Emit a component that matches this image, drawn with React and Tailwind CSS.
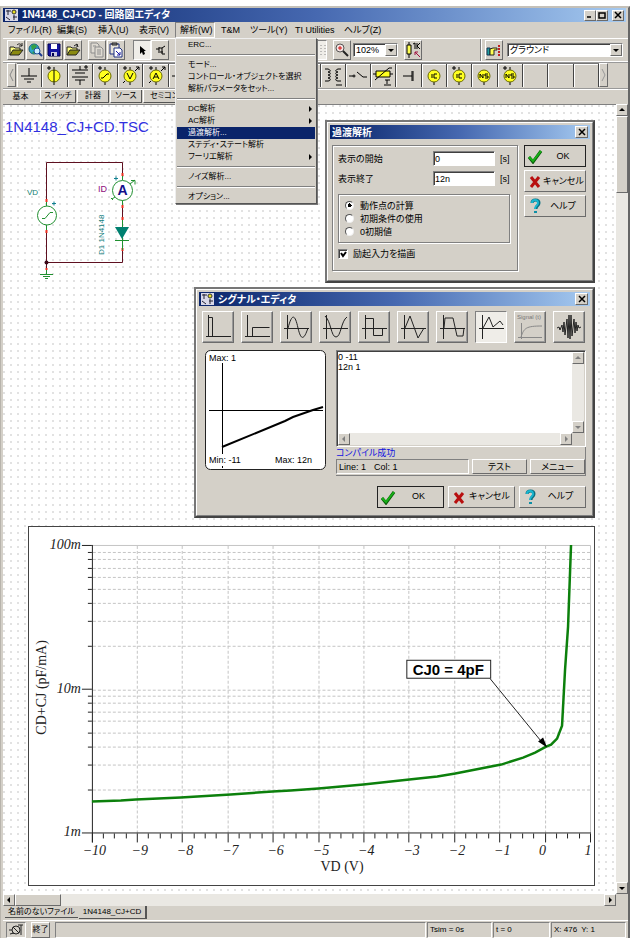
import { useState } from 'react';

const RAISED = 'border border-t-white border-l-white border-r-[#6b6b6b] border-b-[#6b6b6b] bg-[#d4d0c8]';
const SUNKEN = 'border border-t-[#808080] border-l-[#808080] border-r-white border-b-white';

const MENUS = [
  { label: 'ファイル(R)', width: 'w-12' },
  { label: '編集(S)', width: 'w-10' },
  { label: '挿入(U)', width: 'w-10' },
  { label: '表示(V)', width: 'w-10' },
  { label: '解析(W)', width: 'w-10', open: true },
  { label: 'T&M', width: 'w-7' },
  { label: 'ツール(Y)', width: 'w-11' },
  { label: 'TI Utilities', width: 'w-12' },
  { label: 'ヘルプ(Z)', width: 'w-11' },
];

const ANALYSIS_ITEMS = [
  { label: 'ERC...' },
  null,
  { label: 'モード...' },
  { label: 'コントロール・オブジェクトを選択' },
  { label: '解析パラメータをセット...' },
  null,
  { label: 'DC解析', sub: true },
  { label: 'AC解析', sub: true },
  { label: '過渡解析...', active: true },
  { label: 'ステディ・ステート解析' },
  { label: 'フーリエ解析', sub: true },
  null,
  { label: 'ノイズ解析...' },
  null,
  { label: 'オプション...' },
];

const CATEGORY_TABS = [
  { name: '基本', width: 'w-9' },
  { name: 'スイッチ', width: 'w-9' },
  { name: '計器', width: 'w-8' },
  { name: 'ソース', width: 'w-8' },
  { name: 'セミコンダクタ', width: 'w-16' },
];

const Arrow = ({ dir, color = '#000' }) => {
  const paths = {
    up: 'M1 5L4 2L7 5Z',
    down: 'M1 3L4 6L7 3Z',
    left: 'M5 1L2 4L5 7Z',
    right: 'M3 1L6 4L3 7Z',
  };
  return (
    <svg className="w-2 h-2" viewBox="0 0 8 8" fill={color}>
      <path d={paths[dir]} />
    </svg>
  );
};

const ScrollButton = ({ dir, color }) => (
  <button
    aria-label={`scroll ${dir}`}
    className={`w-3 h-3 shrink-0 flex items-center justify-center ${RAISED}`}
  >
    <Arrow dir={dir} color={color} />
  </button>
);

/* ---------- toolbar icons ---------- */

const OpenIcon = ({ up }) => (
  <svg className="w-4 h-4" viewBox="0 0 16 16">
    <path d="M2 13V5h4l1 1h5v2" fill="#ffff80" stroke="#222" />
    <path d="M2 13l3-5h10l-4 5z" fill="#8a8a10" stroke="#222" />
    <path d={up ? 'M9 4l3-2 1 3M12 2v3' : 'M9 3c2-2 4-1 5 1M14 1v3h-3'} fill="none" stroke="#222" />
  </svg>
);

const WebIcon = () => (
  <svg className="w-4 h-4" viewBox="0 0 16 16">
    <circle cx="7" cy="7" r="5" fill="#2aa8c8" stroke="#15607c" />
    <path d="M4 4l3-2 3 2-2 3-3 1zM5 10l3-1 1 2-2 1z" fill="#35a045" />
    <circle cx="10" cy="9" r="3" fill="#cdefff" stroke="#1a4fa0" />
    <path d="M12 11l3 3" stroke="#1a3a90" strokeWidth="2" />
  </svg>
);

const SaveIcon = () => (
  <svg className="w-4 h-4" viewBox="0 0 16 16">
    <path d="M2 2h12v12H3l-1-1z" fill="#1414a0" stroke="#000050" />
    <path d="M5 2h6v5H5z" fill="#fff" />
    <path d="M5 10h6v4H5z" fill="#c8c8e0" />
    <path d="M6 11h2v3H6z" fill="#000050" />
  </svg>
);

const CopyIcon = () => (
  <svg className="w-4 h-4" viewBox="0 0 16 16" fill="#dedad2" stroke="#8c8c8c">
    <path d="M2 1h6l2 2v8H2z" />
    <path d="M6 5h6l2 2v8H6z" />
    <path d="M8 8h4M8 10h4M8 12h4M4 4h3" />
  </svg>
);

const PasteIcon = () => (
  <svg className="w-4 h-4" viewBox="0 0 16 16">
    <path d="M2 2h9v10H2z" fill="#e8e4d8" stroke="#1c2f80" />
    <path d="M4 1h5v2H4z" fill="#888" stroke="#222" />
    <path d="M6 6h6l2 2v7H6z" fill="#fff" stroke="#1c2f80" />
    <path d="M8 9l4 4M12 10v3H9" stroke="#1414a0" fill="none" />
  </svg>
);

const CursorIcon = () => (
  <svg className="w-4 h-4" viewBox="0 0 16 16">
    <path d="M6 4v8l2-2 1 3 2-1-1-3h2z" fill="#000" />
  </svg>
);

const WireIcon = () => (
  <svg className="w-4 h-4" viewBox="0 0 16 16" fill="none" stroke="#000">
    <path d="M4 7h3M7 5v6M7 6h3l3-2M10 6v6h3M8 10h3" />
  </svg>
);

const ZoomIcon = () => (
  <svg className="w-4 h-4" viewBox="0 0 16 16" fill="none">
    <circle cx="6" cy="6" r="4" fill="#f4e4e4" stroke="#555" />
    <path d="M4 6h4M6 4v4" stroke="#d01010" />
    <path d="M9 9l5 5" stroke="#222" strokeWidth="2" />
  </svg>
);

const ResistorIcon = () => (
  <svg className="w-4 h-4" viewBox="0 0 16 16" fill="none" stroke="#000">
    <path d="M4 0v3M4 12v4" />
    <path d="M2 3h4v9H2z" fill="#ffff50" />
    <path d="M8 2l2-1v6M12 1v6M15 1l-3 3 3 3" />
    <path d="M15 15l-5-5M10 13v-3h3" stroke="#a01040" />
  </svg>
);

const HandIcon = () => (
  <svg className="w-4 h-4" viewBox="0 0 16 16">
    <path d="M1 6h3v7H1z" fill="#20a0a0" stroke="#135" />
    <path d="M4 7l3-1h4v2H8v5H4z" fill="#ffff50" stroke="#222" />
    <path d="M13 3v11" stroke="#c02020" strokeWidth="2" strokeDasharray="2 1" />
  </svg>
);

const ToolButton = ({ label, pressed, children }) => (
  <button
    aria-label={label}
    className={`h-5 w-[18px] shrink-0 flex items-center justify-center ${
      pressed ? `${SUNKEN} bg-[#efede8]` : RAISED
    }`}
  >
    {children}
  </button>
);

/* ---------- component palette ---------- */

const Source = ({ children, plus, arrow, top = true }) => (
  <>
    {top && <path d="M12 3v3" />}
    <path d="M12 18v3" />
    <circle cx="12" cy="12" r="6" fill="#ffff20" stroke="#6b6b00" />
    {children}
    {plus && <path d="M5 4h4M7 2v4" />}
    {arrow && <path d="M5 19l2-2M17 7l4-4M18 3h3v3" />}
  </>
);

const GLYPHS = {
  ground: <path d="M12 4v8M4 12h16M7 15h10M10 18h4" />,
  voltage: <Source plus><path d="M12 6v12" /></Source>,
  battery: <path d="M12 2v4M4 6h16M7 9h10M4 13h16M7 16h10M12 16v5M16 3h4M18 1v4" />,
  generator: <Source plus><path d="M8 14h2l4-4h2" /></Source>,
  voltmeter: <Source plus arrow><path d="M9 9l3 6 3-6" /></Source>,
  ammeter: <Source plus arrow><path d="M9 15l3-6 3 6M10 13h4" /></Source>,
  transformer: (
    <path d="M4 5h3c3 1 3 3 0 3 3 0 3 3 0 3 3 0 3 3 0 3 3 0 3 3 0 3H4M20 5h-3c-3 1-3 3 0 3-3 0-3 3 0 3-3 0-3 3 0 3-3 0-3 3 0 3h3M15 21h6" />
  ),
  switch: (
    <>
      <path d="M3 12h4M11 8l6 5h4" />
      <circle cx="8" cy="12" r="1" />
    </>
  ),
  thermistor: (
    <>
      <path d="M2 10h20" />
      <path d="M5 7h14v6H5z" fill="#ffff20" />
      <path d="M4 16l14-12h3M14 16h5M16 16v4M13 21h7" />
    </>
  ),
  jumper: <path d="M6 12h9M15 7v10M16 7v10" />,
  ic: <Source top={false}><path d="M10 10v4M15 10h-3v4h3" /></Source>,
  icPlus: <Source plus><path d="M10 10v4M15 10h-3v4h3" /></Source>,
  ns: <Source top={false}><path d="M8 14v-4l3 4v-4M16 10h-3v2h3v2h-3" /></Source>,
  nsPlus: <Source plus><path d="M8 14v-4l3 4v-4M16 10h-3v2h3v2h-3" /></Source>,
};

const PALETTE = [
  'ground', 'voltage', 'battery', 'generator', 'voltmeter', 'ammeter',
  'switch', '', '', '', '', '',
  'transformer', 'switch', 'thermistor', 'jumper', 'ic', 'icPlus', 'ns', 'nsPlus',
  '', '', '',
];

/* ---------- dialogs ---------- */

const CheckMark = () => (
  <svg className="w-4 h-4 shrink-0" viewBox="0 0 16 16">
    <path d="M2 9l4 5L14 3" fill="none" stroke="#0a5c0a" strokeWidth="3" />
    <path d="M2 9l4 4L14 3" fill="none" stroke="#18b018" strokeWidth="2" />
  </svg>
);

const CrossMark = () => (
  <svg className="w-4 h-4 shrink-0" viewBox="0 0 16 16">
    <path d="M4 4l8 10M12 4L4 14" fill="none" stroke="#b80f0f" strokeWidth="3" />
  </svg>
);

const QuestionMark = () => (
  <svg className="w-4 h-4 shrink-0" viewBox="0 0 16 16" fill="none">
    <path d="M5 5c0-4 7-4 7 0 0 3-3 2-3 6" stroke="#0b6f80" strokeWidth="3" />
    <path d="M5 5c0-4 6-4 6 0 0 3-3 2-3 6" stroke="#19b6d0" strokeWidth="2" />
    <path d="M7 13h3v2H7z" fill="#0e8fa6" />
  </svg>
);

const CommandButton = ({ icon, isDefault, children }) => (
  <button
    className={`w-full h-[22px] flex items-center px-[2px] ${RAISED} ${
      isDefault ? 'outline outline-1 -outline-offset-1 outline-[#222]' : ''
    }`}
  >
    {icon}
    <span className="flex-1 text-center whitespace-nowrap">{children}</span>
  </button>
);

const CloseButton = () => (
  <button aria-label="閉じる" className={`w-[13px] h-3 flex items-center justify-center ${RAISED}`}>
    <svg className="w-2 h-2" viewBox="0 0 8 8" stroke="#000" strokeWidth="1.500">
      <path d="M1 1l6 6M7 1L1 7" />
    </svg>
  </button>
);

const Dialog = ({ title, icon, children }) => (
  <section className="border-2 border-t-[#777] border-l-[#777] border-r-[#444] border-b-[#444] bg-[#d4d0c8]">
    <div className="border border-t-white border-l-white border-r-[#808080] border-b-[#808080] p-[2px]">
      <header className="h-[14px] flex items-center gap-1 px-[2px] bg-linear-to-r from-[#0a246a] via-[#4668b0] to-[#a6caf0]">
        {icon}
        <h2 className="flex-1 text-[10px] font-bold text-white">{title}</h2>
        <CloseButton />
      </header>
      {children}
    </div>
  </section>
);

const AppIcon = () => (
  <svg className="w-[13px] h-3" viewBox="0 0 13 12">
    <path d="M0 0h13v12H0z" fill="#d8d8e8" />
    <path d="M1 2h5M3 1v5M1 8l4 3M8 8h4M9 6v5" stroke="#223" fill="none" />
    <circle cx="9" cy="3" r="2" fill="#e8e020" stroke="#333" />
  </svg>
);

const TIME_FIELDS = [
  { id: 'start', label: '表示の開始', value: '0' },
  { id: 'end', label: '表示終了', value: '12n' },
];

const START_MODES = ['動作点の計算', '初期条件の使用', '0初期値'];

const TransientDialog = () => {
  const [mode, setMode] = useState(START_MODES[0]);
  const [drawExcitation, setDrawExcitation] = useState(true);

  return (
    <Dialog title="過渡解析">
      <div className="flex gap-[6px] pt-[6px] pb-[7px] pl-[2px] pr-1 text-[9px] leading-3">
        <div className="flex-1 border border-[#808080] shadow-[inset_1px_1px_0_#fff,1px_1px_0_#fff] p-[5px]">
          <div className="flex flex-col gap-[5px]">
            {TIME_FIELDS.map((field) => (
              <div key={field.id} className="flex items-center gap-[5px]">
                <label htmlFor={field.id} className="flex-1">{field.label}</label>
                <input
                  id={field.id}
                  defaultValue={field.value}
                  className={`w-[62px] h-[15px] px-px bg-white ${SUNKEN} shadow-[inset_1px_1px_0_#404040]`}
                />
                <span className="w-3">[s]</span>
              </div>
            ))}
          </div>

          <fieldset className="mt-2 mr-[2px] border border-[#808080] shadow-[inset_1px_1px_0_#fff,1px_1px_0_#fff] px-[6px] py-1">
            {START_MODES.map((item) => (
              <label key={item} className="flex items-center gap-[6px] h-[13px]">
                <input
                  type="radio"
                  name="mode"
                  checked={mode === item}
                  onChange={() => setMode(item)}
                  className="appearance-none w-[9px] h-[9px] rounded-full bg-white border border-t-[#555] border-l-[#555] border-r-[#eee] border-b-[#eee] checked:bg-[radial-gradient(#000_2px,#fff_2px)]"
                />
                {item}
              </label>
            ))}
          </fieldset>

          <label className="relative mt-[5px] mb-[5px] flex items-center gap-[5px]">
            <input
              type="checkbox"
              checked={drawExcitation}
              onChange={() => setDrawExcitation(!drawExcitation)}
              className={`appearance-none w-[10px] h-[10px] bg-white ${SUNKEN} shadow-[inset_1px_1px_0_#404040]`}
            />
            {drawExcitation && (
              <svg className="absolute left-px w-2 h-2" viewBox="0 0 8 8" fill="none" stroke="#000" strokeWidth="2">
                <path d="M2 3l2 3 3-4" />
              </svg>
            )}
            励起入力を描画
          </label>
        </div>

        <div className="w-[62px] flex flex-col gap-[3px]">
          <CommandButton icon={<CheckMark />} isDefault>OK</CommandButton>
          <CommandButton icon={<CrossMark />}>キャンセル</CommandButton>
          <CommandButton icon={<QuestionMark />}>ヘルプ</CommandButton>
        </div>
      </div>
    </Dialog>
  );
};

const WAVES = [
  { name: 'pulse', d: 'M5.500 3v22M3 24.500h25M6 5.500h3.500v19' },
  { name: 'step', d: 'M5.500 3v22M3 24.500h25M10.500 24v-8.500h17' },
  { name: 'sine', d: 'M6.500 3v24M3 16.500h25M7 16c4-15 7-14 10 0 3 13 6 12 10 0' },
  { name: 'cosine', d: 'M6.500 3v24M3 16.500h25M5 4c6 5 6 21 11 21 5 0 5-16 11-20' },
  { name: 'square', d: 'M6.500 3v24M3 16.500h25M7 6.500h7.500v17h9V16' },
  { name: 'triangle', d: 'M6.500 3v24M3 16.500h25M7 16l5-12 8 22 6-10' },
  { name: 'trapezoid', d: 'M6.500 3v24M3 16.500h25M7 16l1-10h8l4 18h6l1-8' },
  { name: 'piecewise', d: 'M6.500 3v24M3 16.500h25M7 16l6-11 4 10 7-6 3 4', pressed: true },
  { name: 'signal', d: 'M6.500 11v16M3 25.500h24M6 25c3-9 5-11 21-11', disabled: true },
  { name: 'wave', d: 'M3 16l2-1 1 3 2-5 1 7 1-10 1 13 2-16 1 19 1-23 1 24 1-24 1 21 2-17 1 14 1-11 1 9 1-6 1 3 2-1' },
];

const SignalPreview = () => (
  <svg className="w-[122px] h-[121px] shrink-0" viewBox="0 0 122 121" fontSize="9">
    <rect x="0.500" y="0.500" width="120" height="119" rx="5" fill="#fff" stroke="#222" />
    <path d="M17.500 13v91M17.500 116v2M4 60.500h114" stroke="#000" fill="none" />
    <path d="M17 97L80 71L88 67L108 60L118 57" stroke="#000" strokeWidth="2" fill="none" />
    <text x="4" y="11">Max: 1</text>
    <text x="4" y="113">Min: -11</text>
    <text x="70" y="113">Max: 12n</text>
  </svg>
);

const SignalDialog = () => {
  const [code, setCode] = useState('0 -11\n12n 1');

  return (
    <Dialog title="シグナル・エディタ" icon={<AppIcon />}>
      <div className="flex justify-between pt-[5px] pl-[3px] pr-[5px]">
        {WAVES.map((wave) => (
          <button
            key={wave.name}
            aria-label={wave.name}
            disabled={wave.disabled}
            className={`w-8 h-8 ${wave.pressed ? `${SUNKEN} bg-[#efede8]` : `${RAISED} shadow-[inset_-1px_-1px_0_#999]`}`}
          >
            <svg
              className="w-[30px] h-[30px]"
              viewBox="0 0 30 30"
              fill="none"
              stroke={wave.disabled ? '#888' : '#222'}
            >
              <path d={wave.d} />
              {wave.disabled && (
                <text x="2" y="7" fontSize="6" fill="#777" stroke="none">Signal (t)</text>
              )}
            </svg>
          </button>
        ))}
      </div>

      <div className="flex items-start gap-[9px] mt-[7px] pl-[6px] pr-1 text-[9px] leading-[10px]">
        <SignalPreview />
        <div className="flex-1">
          <div className={`flex ${SUNKEN} shadow-[inset_1px_1px_0_#404040] p-px`}>
            <div className="flex-1 flex flex-col">
              <textarea
                aria-label="signal"
                value={code}
                onChange={(e) => setCode(e.target.value)}
                className="block w-full h-[81px] resize-none bg-white overflow-hidden"
              />
              <div className="flex justify-between bg-[#eae8e3]">
                <ScrollButton dir="left" color="#808080" />
                <ScrollButton dir="right" color="#808080" />
              </div>
            </div>
            <div className="w-3 flex flex-col justify-between mb-3 bg-[#eae8e3]">
              <ScrollButton dir="up" color="#808080" />
              <ScrollButton dir="down" color="#808080" />
            </div>
          </div>
          <div className="border-b border-r border-[#808080] pb-px">
            <p className="leading-3 text-[#1010e0]">コンパイル成功</p>
            <div className="flex items-center gap-[3px]">
              <div className={`flex-1 flex gap-2 px-[2px] h-[15px] items-center ${SUNKEN}`}>
                <span>Line: 1</span>
                <span>Col: 1</span>
              </div>
              <button className={`w-[55px] h-[15px] ${RAISED}`}>テスト</button>
              <button className={`w-[55px] h-[15px] ${RAISED}`}>メニュー</button>
            </div>
          </div>
        </div>
      </div>

      <div className="flex justify-end gap-1 pt-[10px] pb-[5px] pr-1 text-[9px]">
        <div className="w-[67px]"><CommandButton icon={<CheckMark />} isDefault>OK</CommandButton></div>
        <div className="w-[67px]"><CommandButton icon={<CrossMark />}>キャンセル</CommandButton></div>
        <div className="w-[67px]"><CommandButton icon={<QuestionMark />}>ヘルプ</CommandButton></div>
      </div>
    </Dialog>
  );
};

/* ---------- schematic and chart ---------- */

const Schematic = () => (
  <svg className="w-[150px] h-[145px]" viewBox="5 137 150 145" fill="none">
    <g stroke="#5e1020">
      <path d="M46.500 202V162.500H122.500V177M46.500 230V262.500H122.500V249M122.500 205V220" />
      <path d="M46.500 262v8" />
    </g>
    <g stroke="#f03020" strokeWidth="2">
      <path d="M46.500 199v3M46.500 230v3M122.500 173v3M122.500 205v3M122.500 217v3M122.500 248v3M46.500 268v2" />
    </g>
    <circle cx="46.500" cy="262.500" r="2" fill="#3a0818" />
    <g stroke="#209030">
      <circle cx="47" cy="215.500" r="9.500" fill="#fff" />
      <path d="M42 218.500h3l5-6h3M46.500 202v4M46.500 225v5M122.500 176v4M122.500 200v5" />
      <circle cx="122.500" cy="190.500" r="10" fill="#fff" />
      <path d="M130 184l5-4M131 180.500h4v4M112 199l3-2M111 198l2 2" />
      <path d="M122.500 220v30M115 240.500h14" />
      <path d="M46.500 270v4M40 274.500h13M43 276.500h7M45 278.500h3" />
    </g>
    <path d="M115 227h14l-7 12z" fill="#008070" />
    <path d="M52 203.500h4M54 201.500v4M114 178.500h4M116 176.500v4" stroke="#108090" />
    <text x="122.500" y="195" textAnchor="middle" fontSize="14" fontWeight="bold" fill="#10108a">A</text>
    <text x="27" y="195" fontSize="8" fill="#108070">VD</text>
    <text x="98" y="192" fontSize="9" fill="#901080">ID</text>
    <text transform="translate(104 255) rotate(-90)" fontSize="8" fill="#108080">D1 1N4148</text>
  </svg>
);

const X0 = 91.5;
const X_STEP = 45.4;
const Y_BOTTOM = 834.5;
const DECADE = 144;

const xAt = (v) => X0 + (v + 10) * X_STEP;
const yAt = (m) => Y_BOTTOM - Math.log10(m) * DECADE;

const VOLTS = [-10, -9, -8, -7, -6, -5, -4, -3, -2, -1, 0, 1];
const MINOR_M = [2, 3, 4, 5, 6, 7, 8, 9, 20, 30, 40, 50, 60, 70, 80, 90];
const CURVE =
  '91,802 120,801 135,800 180,798 230,795 272,792 290,791 318,789 363,785 409,780 437,777 455,774 501,765 523,758 535,753 546,747 551,745 557,739 562,726 565,670 568,627 571,545';

const Chart = () => (
  <svg
    className="block w-full bg-white border border-[#444]"
    viewBox="28 527 566 359"
    fontFamily="'Liberation Serif', 'Noto Sans CJK JP', serif"
    fontSize="14"
    fill="#222"
  >
    <g stroke="#c4c4c4" strokeDasharray="3 2">
      {VOLTS.slice(1, -1).map((v) => (
        <path key={v} d={`M${Math.round(xAt(v)) - 0.5} 546V834`} />
      ))}
      {[...MINOR_M, 10].map((m) => (
        <path key={m} d={`M92 ${Math.round(yAt(m)) - 0.5}H591`} />
      ))}
    </g>
    <path d="M92 545.500H590.500V834" stroke="#c4c4c4" fill="none" />

    <g stroke="#222">
      <path d="M91.500 545V843M81 833.500H591" />
      <path d="M81 545.500H91M81 689.500H91" />
      {MINOR_M.map((m) => (
        <path key={m} d={`M87 ${Math.round(yAt(m)) - 0.5}H91`} />
      ))}
      {VOLTS.map((v) => (
        <path key={v} d={`M${Math.round(xAt(v)) - 0.5} 834V843`} />
      ))}
      {VOLTS.slice(0, -1).map((v) =>
        [0.25, 0.5, 0.75].map((q) => (
          <path key={v + q} d={`M${Math.round(xAt(v + q)) - 0.5} 834V839`} />
        ))
      )}
    </g>

    <g fontStyle="italic" textAnchor="end">
      <text x="80" y="549">100m</text>
      <text x="80" y="693">10m</text>
      <text x="80" y="837">1m</text>
    </g>
    <g fontStyle="italic" textAnchor="middle">
      {VOLTS.map((v) => (
        <text key={v} x={xAt(v) + (v < 0 ? 2 : -3)} y="856">
          {v < 0 ? `−${-v}` : v}
        </text>
      ))}
    </g>
    <text x="320" y="872">VD (V)</text>
    <text transform="translate(45 735) rotate(-90)">CD+CJ (pF/mA)</text>

    <polyline points={CURVE} fill="none" stroke="#0c800c" strokeWidth="2.500" />

    <path d="M490 679L543 744" stroke="#222" />
    <path d="M547 748L538 742L543 738Z" fill="#000" />
    <rect x="406.500" y="660.500" width="84" height="18" fill="#fff" stroke="#222" />
    <text
      x="448"
      y="675"
      textAnchor="middle"
      fontFamily="'Liberation Sans', sans-serif"
      fontSize="15"
      fontWeight="bold"
      fill="#000"
    >
      CJ0 = 4pF
    </text>
  </svg>
);

/* ---------- window chrome ---------- */

const ComboBox = ({ label, options }) => (
  <div className={`flex h-[14px] w-full bg-white ${SUNKEN} shadow-[inset_1px_1px_0_#404040]`}>
    <select aria-label={label} className="appearance-none flex-1 min-w-0 px-[2px] text-[9px] leading-3">
      {options.map((o) => (
        <option key={o}>{o}</option>
      ))}
    </select>
    <span className={`w-3 shrink-0 flex items-center justify-center ${RAISED}`}>
      <Arrow dir="down" />
    </span>
  </div>
);

const AnalysisMenu = () => (
  <div
    role="menu"
    className="absolute left-0 top-full z-10 w-[142px] bg-[#d4d0c8] border border-t-[#eee] border-l-[#eee] border-r-[#555] border-b-[#555] shadow-[1px_1px_0_#777] px-px"
  >
    {ANALYSIS_ITEMS.map((item, i) =>
      item ? (
        <button
          key={item.label}
          role="menuitem"
          className={`w-full h-3 pl-[11px] pr-px flex items-center justify-between whitespace-nowrap text-[8px] ${
            item.active ? 'bg-[#0a246a] text-white' : ''
          }`}
        >
          {item.label}
          {item.sub && <Arrow dir="right" />}
        </button>
      ) : (
        <div key={i} className="h-[2px] my-[3px] border-t border-[#808080] border-b border-b-white" />
      )
    )}
  </div>
);

const MenuBar = () => (
  <nav className="relative flex h-4 gap-px">
    {MENUS.map((menu) => (
      <div key={menu.label} className={`relative ${menu.width}`}>
        <button
          className={`block w-full h-4 pl-1 text-left whitespace-nowrap text-[9px] leading-[14px] ${
            menu.open ? SUNKEN : 'border border-transparent'
          }`}
        >
          {menu.label}
        </button>
        {menu.open && <AnalysisMenu />}
      </div>
    ))}
  </nav>
);

const ToolBar = () => (
  <div className="flex items-center h-[23px] pl-1 pr-[5px] border-t border-white">
    <div className="flex gap-px">
      <ToolButton label="open"><OpenIcon /></ToolButton>
      <ToolButton label="web"><WebIcon /></ToolButton>
      <ToolButton label="save"><SaveIcon /></ToolButton>
      <ToolButton label="close"><OpenIcon up /></ToolButton>
    </div>
    <div className="flex gap-px ml-[6px]">
      <ToolButton label="copy"><CopyIcon /></ToolButton>
      <ToolButton label="paste"><PasteIcon /></ToolButton>
    </div>
    <div className="flex ml-2">
      <ToolButton label="select" pressed><CursorIcon /></ToolButton>
      <ToolButton label="wire"><WireIcon /></ToolButton>
    </div>
    <div className="w-[158px] shrink-0 flex justify-end">
      <ToolButton label="grid" pressed>
        <svg className="w-4 h-4" viewBox="0 0 16 16" stroke="#888" strokeDasharray="1 2">
          <path d="M3 3v11M7 3v11M11 3v11M15 3v11" />
        </svg>
      </ToolButton>
    </div>
    <div className="flex items-center gap-[2px] ml-[6px]">
      <ToolButton label="zoom"><ZoomIcon /></ToolButton>
      <div className="w-[45px]"><ComboBox label="zoom level" options={['102%']} /></div>
    </div>
    <div className="ml-[6px]"><ToolButton label="values"><ResistorIcon /></ToolButton></div>
    <div className="ml-auto h-full border-l border-[#808080] shadow-[inset_1px_0_0_#fff] flex items-center gap-1 pl-1">
      <ToolButton label="find"><HandIcon /></ToolButton>
      <div className="w-[116px]"><ComboBox label="component" options={['グラウンド']} /></div>
    </div>
  </div>
);

const ComponentBar = () => (
  <div className="flex h-[27px] pl-1 pr-5 py-px border-t border-white shadow-[inset_0_1px_0_#999]">
    <button aria-label="previous" className={`w-[9px] mr-px ${RAISED}`}>
      <svg className="w-[7px] h-5" viewBox="0 0 7 20" fill="none" stroke="#888">
        <path d="M5 4L2 10l3 6" />
      </svg>
    </button>
    <div className="flex-1 flex border-t border-[#777]">
      {PALETTE.map((name, i) => (
        <button
          key={i}
          aria-label={name || 'empty'}
          className="flex-1 flex items-center justify-center border-r border-[#444] shadow-[inset_1px_1px_0_#fff]"
        >
          {name && (
            <svg className="w-6 h-6" viewBox="0 0 24 24" fill="none" stroke="#000">
              {GLYPHS[name]}
            </svg>
          )}
        </button>
      ))}
    </div>
    <button aria-label="next" className={`w-[9px] ${RAISED}`}>
      <svg className="w-[7px] h-5" viewBox="0 0 7 20" fill="none" stroke="#999">
        <path d="M2 4l3 6-3 6" />
      </svg>
    </button>
  </div>
);

const WindowButton = ({ label, d }) => (
  <button aria-label={label} className={`w-3 h-[11px] flex items-center justify-center ${RAISED}`}>
    <svg className="w-2 h-2" viewBox="0 0 8 8" fill="none" stroke="#000" strokeWidth="1.500">
      <path d={d} />
    </svg>
  </button>
);

export default function App() {
  const [tab, setTab] = useState('基本');

  return (
    <div className="min-h-screen flex flex-col bg-white pt-[6px] text-black font-['Liberation_Sans','Noto_Sans_CJK_JP',sans-serif] [font-feature-settings:'palt']">
      <div className="flex-1 flex flex-col bg-[#d4d0c8] border-t-2 border-l border-r-2 border-t-[#c4c0b8] border-l-[#b8b4ac] border-r-[#666] pl-[2px]">
        <header className="flex items-center h-[14px] mr-[2px] px-[2px] gap-1 bg-linear-to-r from-[#0a246a] via-[#4668b0] to-[#a6caf0]">
          <AppIcon />
          <h1 className="flex-1 text-[10px] leading-[14px] font-bold text-white">1N4148_CJ+CD - 回路図エディタ</h1>
          <div className="flex">
            <WindowButton label="minimize" d="M1 6h4" />
            <WindowButton label="maximize" d="M1 2h6v5H1z" />
          </div>
          <WindowButton label="close" d="M1 1l6 6M7 1L1 7" />
        </header>

        <MenuBar />
        <ToolBar />
        <ComponentBar />

        <div className="flex items-start h-4 gap-px pt-px border-t border-[#999] shadow-[inset_0_1px_0_#fff]">
          {CATEGORY_TABS.map(({ name, width }) => (
            <button
              key={name}
              onClick={() => setTab(name)}
              className={`${width} whitespace-nowrap text-[8px] leading-3 border-r border-[#555] ${
                tab === name ? 'h-[14px] border-r-transparent' : 'h-[13px] border-b border-l border-l-white'
              }`}
            >
              {name}
            </button>
          ))}
        </div>

        <div className="flex-1 flex">
          <main className="flex-1 min-w-0 flex flex-col bg-white bg-[radial-gradient(circle_at_1px_1px,#e2e2e2_1px,transparent_1px)] bg-[length:7px_7px] pt-[15px] pb-[5px] pr-[21px] border-t border-[#808080]">
            <div className="flex items-start justify-between pl-[2px]">
              <div>
                <h2 className="text-[15px] leading-[14px] text-[#3030e0]">1N4148_CJ+CD.TSC</h2>
                <div className="pt-[3px]"><Schematic /></div>
              </div>
              <div className="w-[270px]"><TransientDialog /></div>
            </div>
            <div className="w-[401px] ml-auto mt-1"><SignalDialog /></div>
            <div className="ml-[25px] mt-2"><Chart /></div>
          </main>

          <div className="w-3 flex flex-col bg-[#eae8e3]">
            <ScrollButton dir="up" />
            <div className={`h-[77px] ${RAISED}`} />
            <div className="flex-1" />
            <ScrollButton dir="down" />
          </div>
        </div>

        <div className="flex h-3 mr-3 bg-[#eae8e3]">
          <ScrollButton dir="left" />
          <div className={`w-[46px] ${RAISED}`} />
          <div className="flex-1" />
          <ScrollButton dir="right" />
        </div>

        <div className="flex items-start h-[14px] pl-[2px] gap-px text-[8px] leading-3">
          <button className="h-3 px-[3px] border-b border-[#555]">名前のないファイル</button>
          <button className="h-[13px] px-1 border-b border-r-2 border-[#555]">1N4148_CJ+CD</button>
        </div>

        <footer className="flex items-center h-[18px] pl-[3px] pr-[2px] gap-px border-t border-white text-[8px] leading-[14px]">
          <button aria-label="run" className={`w-5 h-4 flex items-center justify-center ${SUNKEN}`}>
            <svg className="w-4 h-3 shrink-0" viewBox="0 0 16 12" fill="none" stroke="#222">
              <circle cx="8" cy="6" r="4" />
              <path d="M1 6h3M5 3l6 6M13 1v10M10 1h5M2 10l4-1" />
            </svg>
          </button>
          <button className={`w-[19px] h-4 ml-1 mr-1 whitespace-nowrap ${RAISED}`}>終了</button>
          <div className={`flex-1 h-4 ${SUNKEN}`} />
          <div className={`w-[65px] h-4 px-[2px] ${SUNKEN}`}>Tsim = 0s</div>
          <div className={`w-[57px] h-4 px-[2px] ${SUNKEN}`}>t = 0</div>
          <div className={`w-[75px] h-4 px-[2px] flex gap-1 ${SUNKEN}`}>
            <span>X: 476</span>
            <span>Y: 1</span>
          </div>
        </footer>
      </div>
    </div>
  );
}
